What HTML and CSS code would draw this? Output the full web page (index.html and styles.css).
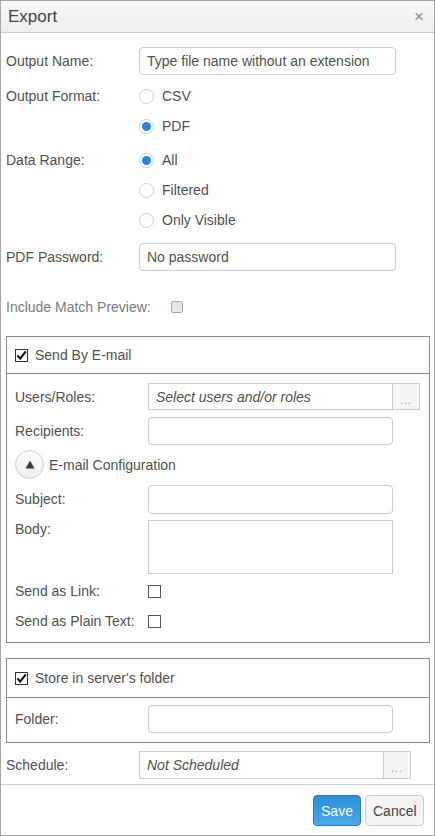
FILE: index.html
```html
<!DOCTYPE html>
<html>
<head>
<meta charset="utf-8">
<link rel="stylesheet" href="styles.css">
</head>
<body>
<div class="dialog">
  <div class="header">
    <span class="title">Export</span>
    <span class="close">×</span>
  </div>
  <div class="content">
    <div class="row row-name">
      <span class="lbl">Output Name:</span>
      <input class="field w257" type="text" placeholder="Type file name without an extension">
    </div>
    <div class="row row-format">
      <span class="lbl lbl-opt">Output Format:</span>
      <div class="options">
        <div class="opt"><span class="radio"></span><span>CSV</span></div>
        <div class="opt"><span class="radio on"></span><span>PDF</span></div>
      </div>
    </div>
    <div class="row row-range">
      <span class="lbl lbl-opt">Data Range:</span>
      <div class="options">
        <div class="opt"><span class="radio on"></span><span>All</span></div>
        <div class="opt"><span class="radio"></span><span>Filtered</span></div>
        <div class="opt"><span class="radio"></span><span>Only Visible</span></div>
      </div>
    </div>
    <div class="row row-pass">
      <span class="lbl">PDF Password:</span>
      <input class="field w257" type="text" placeholder="No password">
    </div>
    <div class="row row-preview">
      <span class="lbl-muted">Include Match Preview:</span>
      <span class="cb-disabled"></span>
    </div>

    <div class="box box-mail">
      <div class="box-head">
        <span class="cb-checked"><svg width="13" height="13" viewBox="0 0 13 13"><path d="M2.4 6.4 L5.2 9.6 L10.8 2.4" fill="none" stroke="#111" stroke-width="2.2"/></svg></span>
        <span>Send By E-mail</span>
      </div>
      <div class="box-body">
        <div class="row row-users">
          <span class="lbl">Users/Roles:</span>
          <div class="group">
            <input class="field gfield ital" type="text" placeholder="Select users and/or roles">
            <span class="dots gdots">...</span>
          </div>
        </div>
        <div class="row row-recip">
          <span class="lbl">Recipients:</span>
          <input class="field w245" type="text">
        </div>
        <div class="row row-config">
          <span class="circle"><svg width="10" height="9" viewBox="0 0 10 9"><polygon points="5,0.5 9.5,8.5 0.5,8.5" fill="#3a3f47"/></svg></span>
          <span>E-mail Configuration</span>
        </div>
        <div class="row row-subject">
          <span class="lbl">Subject:</span>
          <input class="field w245 h29" type="text">
        </div>
        <div class="row row-body">
          <span class="lbl lbl-top">Body:</span>
          <textarea class="area"></textarea>
        </div>
        <div class="row row-check">
          <span class="lbl lbl30">Send as Link:</span>
          <span class="cb"></span>
        </div>
        <div class="row row-check">
          <span class="lbl lbl30">Send as Plain Text:</span>
          <span class="cb"></span>
        </div>
      </div>
    </div>

    <div class="box box-store">
      <div class="box-head box-head2">
        <span class="cb-checked"><svg width="13" height="13" viewBox="0 0 13 13"><path d="M2.4 6.4 L5.2 9.6 L10.8 2.4" fill="none" stroke="#111" stroke-width="2.2"/></svg></span>
        <span>Store in server's folder</span>
      </div>
      <div class="box-body box-body2">
        <div class="row">
          <span class="lbl">Folder:</span>
          <input class="field w245" type="text">
        </div>
      </div>
    </div>

    <div class="row row-sched">
      <span class="lbl">Schedule:</span>
      <div class="group">
        <input class="field sfield ital" type="text" placeholder="Not Scheduled">
        <span class="dots">...</span>
      </div>
    </div>
  </div>
  <div class="footer">
    <button class="btn save">Save</button>
    <button class="btn cancel">Cancel</button>
  </div>
</div>
</body>
</html>
```

FILE: styles.css
```css
* { box-sizing: border-box; }
body {
  margin: 0;
  font-family: "Liberation Sans", Arial, sans-serif;
  font-size: 14px;
  color: #505050;
  background: #fff;
}
.dialog {
  width: 435px;
  height: 836px;
  border: 1px solid #a6a6a6;
  display: flex;
  flex-direction: column;
}
.header {
  height: 32px;
  flex: none;
  border-bottom: 1px solid #c9c9c9;
  background: linear-gradient(#f8f8f8, #eeeeee);
  display: flex;
  align-items: center;
  justify-content: space-between;
  padding: 0 10px 0 7px;
}
.title { font-size: 17px; color: #444; }
.close { font-size: 17px; color: #8a8a8a; line-height: 1; }
.content {
  flex: 1;
  min-height: 0;
  padding: 0 4px 0 5px;
}
.row { display: flex; align-items: flex-start; }
.lbl { width: 133px; flex: none; line-height: 28px; }
.lbl-opt { line-height: 30px; }
.lbl-top { line-height: 18px; }
.lbl30 { line-height: 30px; }
.field {
  height: 28px;
  border: 1px solid #cccccc;
  border-radius: 4px;
  padding: 0 7px;
  font: inherit;
  color: #505050;
  background: #fff;
  outline: none;
}
.field::placeholder { color: #505050; opacity: 1; }
.ital, .ital::placeholder { font-style: italic; }
.w257 { width: 257px; }
.w245 { width: 245px; }
.h29 { height: 29px; }

.row-name { margin-top: 14px; }
.row-format { margin-top: 6px; }
.row-range { margin-top: 4px; }
.row-pass { margin-top: 8px; }
.row-preview { margin-top: 22px; height: 28px; align-items: center; }

.options { display: flex; flex-direction: column; }
.opt { height: 30px; display: flex; align-items: center; }
.radio {
  width: 15px; height: 15px;
  border: 1px solid #cfcfcf;
  border-radius: 50%;
  background: #fff;
  margin-right: 8px;
  display: flex; align-items: center; justify-content: center;
}
.radio.on::after {
  content: "";
  width: 9px; height: 9px;
  border-radius: 50%;
  background: #2389d8;
}

.lbl-muted { color: #7a7a7a; width: 165px; flex: none; }
.cb-disabled {
  width: 12px; height: 12px;
  border: 1px solid #aaaaaa;
  border-radius: 2px;
  background: linear-gradient(#e2e2e2, #ececec);
}

.box {
  width: 424px;
  border: 1px solid #8a8a8a;
  margin-top: 15px;
}
.box-head {
  height: 37px;
  border-bottom: 1px solid #8a8a8a;
  display: flex;
  align-items: center;
  padding-left: 8px;
}
.box-head2 { height: 39px; }
.cb-checked {
  width: 13px; height: 13px;
  border: 1px solid #333;
  background: #fff;
  margin-right: 7px;
  display: flex;
  position: relative;
}
.cb-checked svg { position: absolute; left: -1px; top: -1px; }
.box-body { padding: 9px 0 6px 8px; }
.box-body2 { padding: 7px 0 9px 8px; }

.group { display: flex; }
.gfield { width: 245px; height: 27px; border-radius: 0; }
.sfield { width: 245px; border-radius: 0; }
.dots {
  width: 28px;
  height: 28px;
  margin-left: -1px;
  border: 1px solid #cccccc;
  background: #f4f4f4;
  color: #888;
  font-size: 10px;
  line-height: 10px;
  text-align: center;
  padding-top: 12px;
  letter-spacing: 1px;
}
.gdots { height: 27px; }
.row-recip { margin-top: 6px; }
.row-config { margin-top: 5px; align-items: center; }
.circle {
  width: 29px; height: 29px;
  border: 1px solid #cccccc;
  border-radius: 50%;
  background: linear-gradient(#fbfbfb, #efefef);
  display: flex; align-items: center; justify-content: center;
  margin-right: 5px;
}
.circle svg { margin-top: -1px; }
.row-subject { margin-top: 6px; }
.row-body { margin-top: 6px; }
.area {
  width: 245px; height: 54px;
  border: 1px solid #cccccc;
  border-radius: 0;
  resize: none;
  font: inherit;
  outline: none;
  display: block;
}
.row-check { height: 30px; align-items: center; }
.row-body + .row-check { margin-top: 2px; }
.cb {
  width: 13px; height: 13px;
  border: 1px solid #555;
  background: #fff;
}
.box-store { margin-top: 15px; }
.row-sched { margin-top: 8px; }

.footer {
  flex: none;
  height: 51px;
  border-top: 1px solid #cfcfcf;
  display: flex;
  justify-content: flex-end;
  align-items: flex-start;
  padding: 10px 10px 0 0;
  gap: 4px;
}
.btn {
  height: 31px;
  border-radius: 4px;
  font-family: "Liberation Sans", Arial, sans-serif;
  font-size: 14px;
  padding: 0 7px;
}
.save {
  width: 48px;
  color: #fff;
  background: linear-gradient(#2a8fdb, #4aa8e8);
  border: 1px solid #1d7fc8;
}
.cancel {
  width: 59px;
  color: #444;
  background: #f4f4f4;
  border: 1px solid #cccccc;
}
```
